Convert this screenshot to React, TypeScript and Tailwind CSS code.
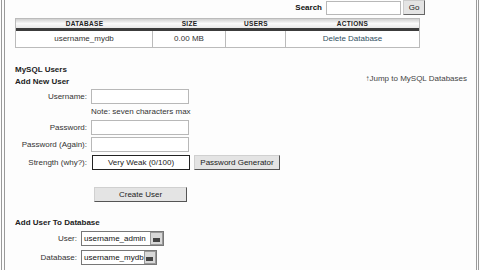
const Field = ({ w = "w-[98px]" }: { w?: string }) => (
  <div className={`${w} h-[15px] border border-[#b8b8b8] bg-white`} />
);

const Btn = ({ children, w }: { children: React.ReactNode; w: string }) => (
  <button className={`${w} h-[15px] flex items-center justify-center bg-[#e4e4e4] border border-[#d0d0d0] border-r-[#555] border-b-[#555] text-[8px] leading-none text-[#222]`}>
    {children}
  </button>
);

const Select = ({ value, w }: { value: string; w: string }) => (
  <div className={`${w} h-[15px] flex items-center border border-[#777] bg-white`}>
    <span className="flex-1 pl-[2px] text-[8px] leading-none text-[#111] whitespace-nowrap">{value}</span>
    <span className="w-[13px] h-[13px] flex items-end justify-center bg-[#d8d8d8] border border-[#999]">
      <span className="w-[7px] h-[4px] mb-[2px] bg-[#444]" />
    </span>
  </div>
);

export default function App() {
  const label = "w-[76px] text-right pr-[4px] text-[8px] text-[#333] leading-none";
  return (
    <div className="w-[480px] h-[270px] overflow-hidden bg-[#fdfdfd] flex font-['Liberation_Sans',Arial,sans-serif]">
      <div className="flex-1 ml-[1px] mr-[1px] border-l-4 border-r-[3px] border-double border-[#9a9a9a] pl-[10px] flex flex-col">
        {/* search */}
        <div className="w-[410px] h-[15px] flex items-center justify-end gap-[2px]">
          <span className="text-[8px] font-bold text-[#111] mr-[2px]">Search</span>
          <div className="w-[75px] h-[14px] border border-[#b8b8b8] bg-white" />
          <button className="w-[22px] h-[15px] bg-[#e4e4e4] border border-[#ccc] border-r-[#666] border-b-[#666] text-[8px] text-[#222] leading-none">Go</button>
        </div>

        {/* table */}
        <div className="w-[405px] mt-[3px] border border-[#bbb] text-[8px]">
          <div className="flex h-[12px] bg-gradient-to-b from-[#d0d0d0] via-[#fafafa] to-[#e8e8e8] border-b-[3px] border-[#3c3c3c] text-[6.5px] font-bold uppercase tracking-[0.3px] text-[#222]">
            <div className="w-[137px] flex items-center justify-center">Database</div>
            <div className="w-[73px] flex items-center justify-center">Size</div>
            <div className="w-[60px] flex items-center justify-center">Users</div>
            <div className="flex-1 flex items-center justify-center">Actions</div>
          </div>
          <div className="flex h-[16px] bg-white text-[#333]">
            <div className="w-[137px] flex items-center justify-center border-r border-[#bbb]">username_mydb</div>
            <div className="w-[73px] flex items-center justify-center border-r border-[#bbb]">0.00 MB</div>
            <div className="w-[60px] border-r border-[#bbb]" />
            <div className="flex-1 flex items-center justify-center text-[#2f4f5f]">Delete Database</div>
          </div>
        </div>

        {/* users header */}
        <div className="mt-[16px] text-[8px] font-bold text-[#222] leading-[12px]">MySQL Users</div>
        <div className="flex items-center justify-between pr-[9px]">
          <span className="text-[8px] font-bold text-[#222] leading-[12px]">Add New User</span>
          <span className="text-[8px] text-[#444] -mt-[6px]">↑Jump to MySQL Databases</span>
        </div>

        {/* form */}
        <div className="mt-[1px] flex flex-col">
          <div className="flex items-center h-[15px]">
            <span className={label}>Username:</span>
            <Field />
          </div>
          <div className="flex items-center h-[16px]">
            <span className="w-[76px]" />
            <span className="text-[8px] text-[#333] leading-none">Note: seven characters max</span>
          </div>
          <div className="flex items-center h-[15px]">
            <span className={label}>Password:</span>
            <Field />
          </div>
          <div className="flex items-center h-[15px] mt-[2px]">
            <span className={label}>Password (Again):</span>
            <Field />
          </div>
          <div className="flex items-center h-[15px] mt-[3px]">
            <span className={label}>Strength (why?):</span>
            <div className="w-[98px] h-[15px] ml-[1px] border border-[#222] bg-white flex items-center justify-center text-[8px] text-[#222]">
              Very Weak (0/100)
            </div>
            <div className="ml-[4px]">
              <Btn w="w-[86px]">Password Generator</Btn>
            </div>
          </div>
          <div className="flex items-center h-[15px] mt-[17px]">
            <span className="w-[79px]" />
            <Btn w="w-[93px]">Create User</Btn>
          </div>
        </div>

        {/* add user to db */}
        <div className="mt-[15px] text-[8px] font-bold text-[#222] leading-[12px]">Add User To Database</div>
        <div className="mt-[2px] flex items-center h-[15px]">
          <span className="w-[66px] text-right pr-[4px] text-[8px] text-[#333] leading-none">User:</span>
          <Select value="username_admin" w="w-[83px]" />
        </div>
        <div className="mt-[4px] flex items-center h-[15px]">
          <span className="w-[66px] text-right pr-[4px] text-[8px] text-[#333] leading-none">Database:</span>
          <Select value="username_mydb" w="w-[76px]" />
        </div>
      </div>
    </div>
  );
}
